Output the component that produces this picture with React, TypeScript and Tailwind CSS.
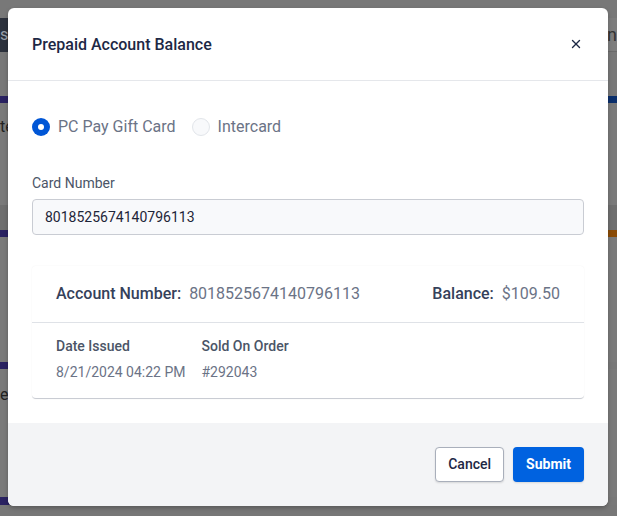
import { X } from 'lucide-react';

function Radio({ checked, label }: { checked: boolean; label: string }) {
  return (
    <label className="flex items-center gap-2 cursor-pointer">
      {checked ? (
        <span className="w-[18px] h-[18px] rounded-full bg-[#0056d6] flex items-center justify-center">
          <span className="w-[6px] h-[6px] rounded-full bg-white" />
        </span>
      ) : (
        <span className="w-[18px] h-[18px] rounded-full border border-[#e2e5ea] bg-[#f8f9fb]" />
      )}
      <span className="text-[16px] text-[#6b7386]">{label}</span>
    </label>
  );
}

// dimmed page behind the dialog
function Backdrop() {
  return (
    <div className="w-full h-[516px] bg-[#787878] flex flex-col">
      <div className="h-[18px]" />
      <div className="h-[34px] flex justify-between">
        <div className="w-[10px] bg-[#2c313c] text-[#9aa0aa] text-[16px] leading-[34px] overflow-hidden">s</div>
        <div className="w-[10px] bg-[#7d7d7d] border-b border-[#6a6a6a] text-[#333] text-[18px] leading-[34px] overflow-hidden">n</div>
      </div>
      <div className="h-[44px]" />
      <div className="h-[7px] flex justify-between">
        <div className="w-[10px] bg-[#2a2262]" />
        <div className="w-[10px] bg-[#0a2e6b]" />
      </div>
      <div className="h-[102px] bg-[#7a7a7a] text-[#222] text-[16px] pt-[12px] overflow-hidden">te</div>
      <div className="h-[25px] bg-[#6f6f6f]" />
      <div className="h-[7px] flex justify-between">
        <div className="w-[10px] bg-[#2a2262]" />
        <div className="w-[10px] bg-[#8a4b06]" />
      </div>
      <div className="h-[125px] bg-[#7a7a7a]" />
      <div className="h-[7px] flex">
        <div className="w-[10px] bg-[#2a2262]" />
      </div>
      <div className="h-[128px] bg-[#7a7a7a] text-[#222] text-[16px] pt-[14px] overflow-hidden">e</div>
      <div className="h-[8px] flex">
        <div className="w-[10px] bg-[#2a2262]" />
      </div>
      <div className="flex-1 bg-[#777]" />
    </div>
  );
}

export default function App() {
  return (
    <div className="relative w-[617px] h-[516px] overflow-hidden font-['Roboto',_sans-serif]">
      <Backdrop />

      <div className="absolute inset-0 flex items-start justify-start pt-[8px] pl-[8px]">
        <div className="w-[600px] h-[498px] bg-white rounded-[6px] shadow-[0_2px_4px_rgba(0,0,0,0.25)] overflow-hidden flex flex-col">
          {/* Header */}
          <div className="h-[73px] px-6 flex items-center justify-between border-b border-[#e5e7eb]">
            <h2 className="text-[16px] font-medium text-[#1d2845] pt-[1px]">Prepaid Account Balance</h2>
            <button className="w-6 h-6 flex items-center justify-center text-[#1d2845] mr-[-4px]" aria-label="Close">
              <X className="w-[14px] h-[14px]" strokeWidth={2.4} />
            </button>
          </div>

          {/* Body */}
          <div className="flex-1 px-6 pt-[33px]">
            <div className="flex items-center gap-4 h-[26px]">
              <Radio checked label="PC Pay Gift Card" />
              <Radio checked={false} label="Intercard" />
            </div>

            <div className="mt-[33px]">
              <label className="block text-[14px] text-[#4b5567] leading-[20px]">Card Number</label>
              <input
                readOnly
                value="8018525674140796113"
                className="mt-[6px] w-full h-[36px] px-3 rounded-[4px] border border-[#c9ccd3] bg-[#f8f9fb] text-[14px] text-[#1e2538] outline-none"
              />
            </div>

            <div className="mt-[31px] rounded-[4px] border-b border-[#c9ccd3] shadow-[0_0_2px_rgba(0,0,0,0.06)]">
              <div className="h-[57px] px-6 flex items-center justify-between border-b border-[#dfe2e7]">
                <div className="flex items-center gap-2 text-[16px]">
                  <span className="font-medium text-[#35415a]">Account Number:</span>
                  <span className="text-[#6b7386]">8018525674140796113</span>
                </div>
                <div className="flex items-center gap-2 text-[16px]">
                  <span className="font-medium text-[#35415a]">Balance:</span>
                  <span className="text-[#6b7386]">$109.50</span>
                </div>
              </div>
              <div className="h-[75px] px-6 pt-[13px] flex gap-4">
                <div className="flex flex-col gap-[6px]">
                  <span className="text-[14px] font-medium text-[#4b5567] leading-[20px]">Date Issued</span>
                  <span className="text-[14px] text-[#6b7386] leading-[20px]">8/21/2024 04:22 PM</span>
                </div>
                <div className="flex flex-col gap-[6px]">
                  <span className="text-[14px] font-medium text-[#4b5567] leading-[20px]">Sold On Order</span>
                  <span className="text-[14px] text-[#6b7386] leading-[20px]">#292043</span>
                </div>
              </div>
            </div>
          </div>

          {/* Footer */}
          <div className="h-[83px] bg-[#f3f4f6] px-6 flex items-center justify-end gap-[9px]">
            <button className="h-[35px] px-3 rounded-[4px] border border-[#a9afbb] bg-white text-[14px] font-medium text-[#1d2845] shadow-[0_1px_2px_rgba(0,0,0,0.12)]">
              Cancel
            </button>
            <button className="h-[35px] px-[13px] rounded-[4px] bg-[#0062e0] text-[14px] font-bold text-white shadow-[0_1px_2px_rgba(0,0,0,0.12)]">
              Submit
            </button>
          </div>
        </div>
      </div>
    </div>
  );
}
